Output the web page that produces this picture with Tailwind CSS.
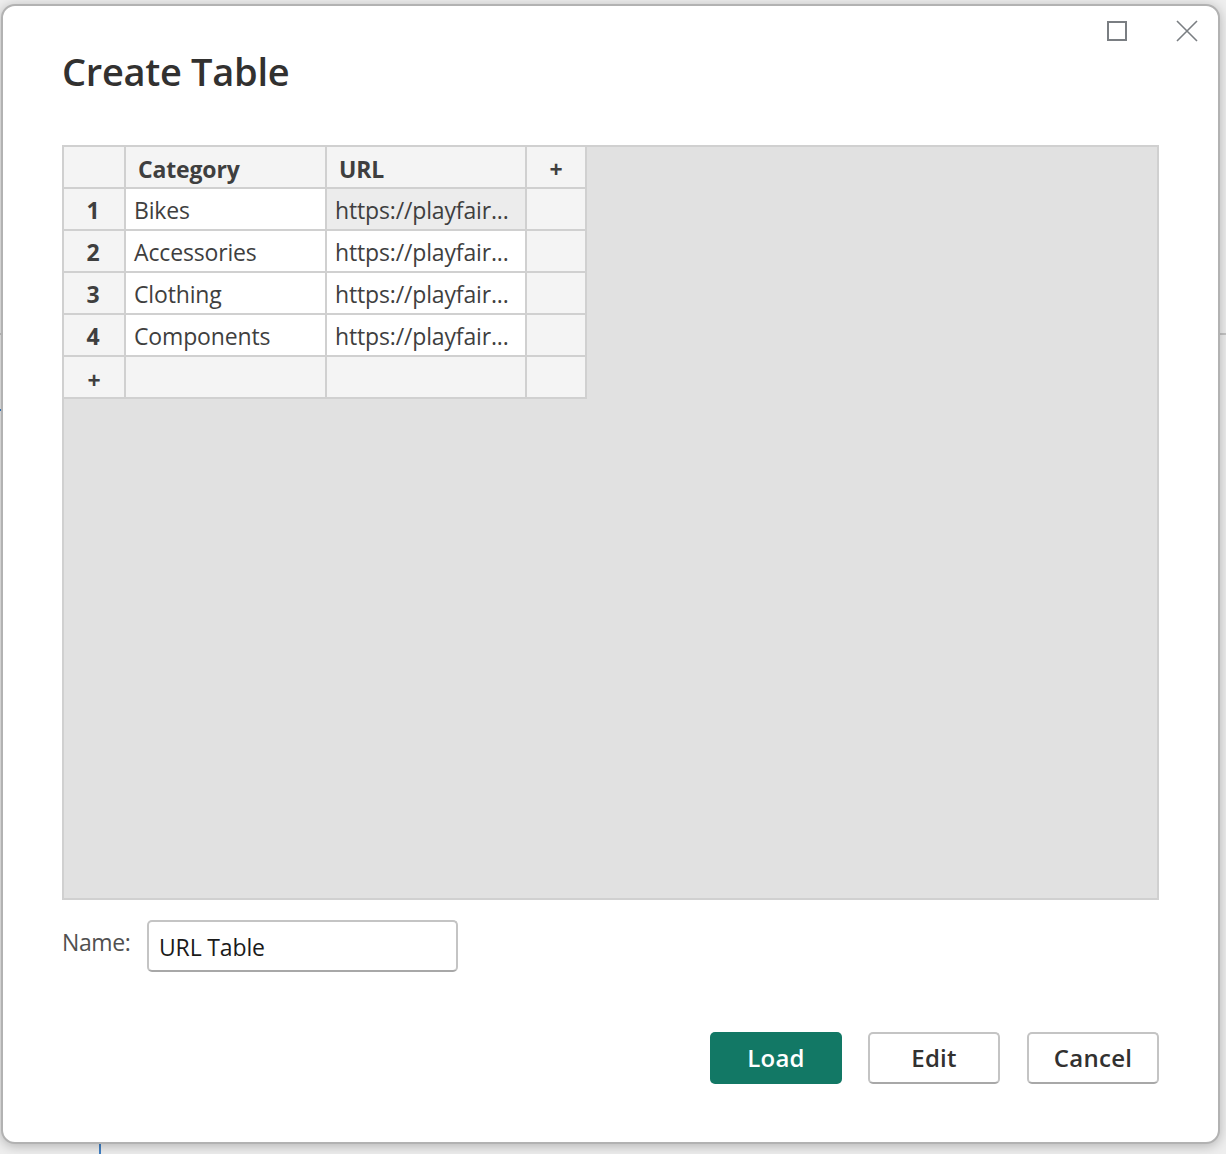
<!DOCTYPE html>
<html lang="en">
<head>
    <meta charset="UTF-8">
    <title>Create Table</title>
    <script src="https://cdn.jsdelivr.net/npm/@tailwindcss/browser@4"></script>
</head>
<body class="relative h-[1154px] w-[1226px] overflow-hidden bg-[#eeeeee] font-['Open_Sans',sans-serif]">
    <!-- Window behind the dialog -->
    <div class="absolute left-0 top-[333px] h-[2px] w-full bg-[#c4c4c4]"></div>
    <div class="absolute left-0 top-[409px] h-[2px] w-[3px] bg-[#3f7fc4]"></div>
    <div class="absolute left-[99px] top-[1140px] h-[14px] w-[2px] bg-[#3f7fc4]"></div>

    <!-- Dialog -->
    <div class="relative ml-[1px] mt-[4px] flex h-[1140px] w-[1219px] flex-col rounded-[14px] border-2 border-[#b2b2b2] bg-white pl-[59px] pr-[58px] shadow-[0_2px_12px_rgba(0,0,0,0.25)]">
        <button class="absolute right-[91px] top-[15px] h-[20px] w-[20px] border-2 border-[#7a7e82]"></button>
        <svg class="absolute right-[20px] top-[14px]" width="22" height="22" viewBox="0 0 22 22" fill="none" stroke="#7a7e82" stroke-width="1.6">
            <path d="M1 1 L21 21 M21 1 L1 21"/>
        </svg>

        <h1 class="mt-[40px] h-[50px] text-[38px] leading-[50px] font-semibold tracking-[-0.3px] text-[#323130]">Create Table</h1>

        <!-- Table editor -->
        <div class="mt-[49px] h-[755px] w-[1097px] border-2 border-[#d0d0d0] bg-[#e1e1e1]">
            <div class="grid w-[523px] grid-cols-[60px_199px_198px_58px] grid-rows-[40px_40px_40px_40px_40px_40px] gap-[2px] border-r-2 border-b-2 border-[#d0d0d0] bg-[#d0d0d0] text-[23px] leading-[42px] tracking-[-0.15px] text-[#3f3f3f]">
                <div class="bg-[#f4f4f4]"></div>
                <div class="bg-[#f4f4f4] pl-[12px] leading-[44px] font-bold">Category</div>
                <div class="bg-[#f4f4f4] pl-[12px] leading-[44px] font-bold">URL</div>
                <div class="bg-[#f4f4f4] text-center leading-[44px] font-bold">+</div>

                <div class="bg-[#f4f4f4] pr-[2px] text-center font-bold">1</div>
                <div class="bg-white pl-[8px]">Bikes</div>
                <div class="bg-[#ececec] pl-[8px]">https://playfair...</div>
                <div class="bg-[#f4f4f4]"></div>

                <div class="bg-[#f4f4f4] pr-[2px] text-center font-bold">2</div>
                <div class="bg-white pl-[8px]">Accessories</div>
                <div class="bg-white pl-[8px]">https://playfair...</div>
                <div class="bg-[#f4f4f4]"></div>

                <div class="bg-[#f4f4f4] pr-[2px] text-center font-bold">3</div>
                <div class="bg-white pl-[8px]">Clothing</div>
                <div class="bg-white pl-[8px]">https://playfair...</div>
                <div class="bg-[#f4f4f4]"></div>

                <div class="bg-[#f4f4f4] pr-[2px] text-center font-bold">4</div>
                <div class="bg-white pl-[8px]">Components</div>
                <div class="bg-white pl-[8px]">https://playfair...</div>
                <div class="bg-[#f4f4f4]"></div>

                <div class="bg-[#f4f4f4] text-center leading-[46px] font-bold">+</div>
                <div class="bg-[#f4f4f4]"></div>
                <div class="bg-[#f4f4f4]"></div>
                <div class="bg-[#f4f4f4]"></div>
            </div>
        </div>

        <!-- Name field -->
        <div class="mt-[20px] flex items-start">
            <label class="mt-[7px] w-[85px] text-[23px] leading-[30px] tracking-[-0.4px] text-[#505050]">Name:</label>
            <div class="flex h-[52px] w-[311px] items-center rounded-[5px] border-2 border-[#c4c4c4] border-b-[#a8a8a8] pl-[10px] pt-[2px] text-[23px] tracking-[-0.15px] text-[#1a1a1a]">URL Table</div>
        </div>

        <!-- Actions -->
        <div class="mt-[60px] flex w-[1097px] justify-end text-[24px] font-semibold tracking-[0.25px]">
            <button class="h-[52px] w-[132px] rounded-[5px] bg-[#127865] text-white">Load</button>
            <button class="ml-[26px] h-[52px] w-[132px] rounded-[5px] border-2 border-[#c4c4c4] border-b-[#a8a8a8] text-[#323130]">Edit</button>
            <button class="ml-[27px] h-[52px] w-[132px] rounded-[5px] border-2 border-[#c4c4c4] border-b-[#a8a8a8] text-[#323130]">Cancel</button>
        </div>
    </div>
</body>
</html>
